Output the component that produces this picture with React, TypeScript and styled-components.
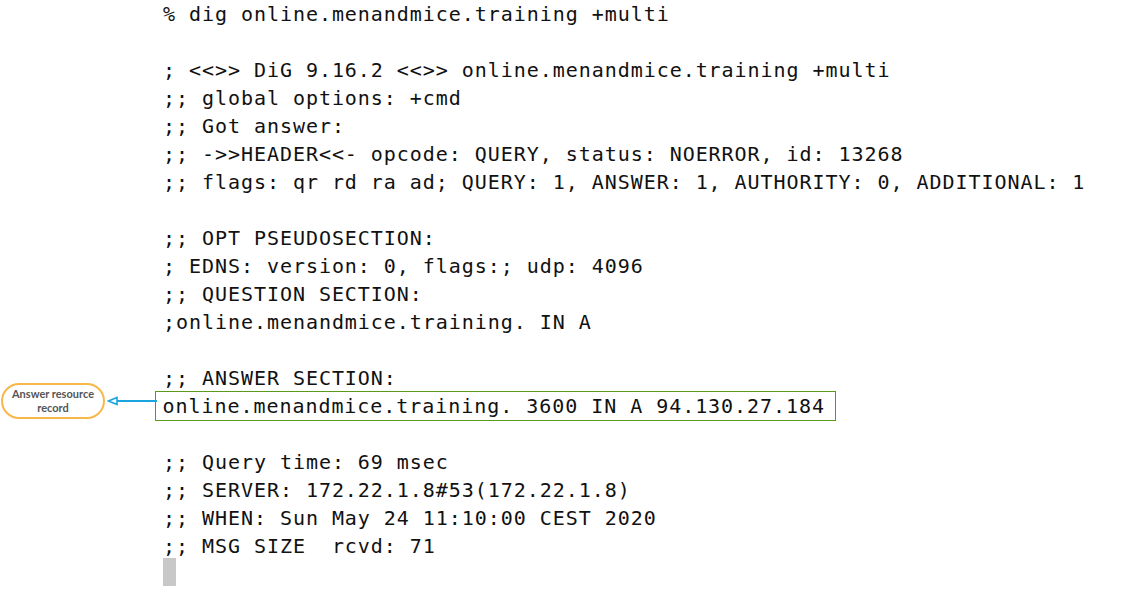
import React from "react";
import styled, { createGlobalStyle } from "styled-components";

const Global = createGlobalStyle`
  html, body { margin: 0; padding: 0; background: #ffffff; }
  body { width: 1143px; height: 589px; overflow: hidden; }
`;

const Terminal = styled.div`
  padding: 0 0 0 163px;
  font-family: "DejaVu Sans Mono", "Liberation Mono", monospace;
  font-size: 20px;
  letter-spacing: 0.95px;
  line-height: 28px;
  color: #111111;
  white-space: pre;
`;

const Line = styled.div`
  height: 28px;
`;

const HighlightRow = styled.div`
  position: relative;
  height: 28px;
`;

const HighlightBox = styled.div`
  display: inline-block;
  margin: -3px 0 0 -8px;
  padding: 0 10px 0 6.5px;
  border: 1.5px solid #5b9a18;
  line-height: 28px;
`;

const Callout = styled.div`
  position: absolute;
  left: -162px;
  top: -9px;
  display: flex;
  align-items: center;
`;

const Pill = styled.div`
  box-sizing: border-box;
  width: 104px;
  height: 36px;
  border: 2px solid #f8b849;
  border-radius: 18px;
  display: flex;
  align-items: center;
  justify-content: center;
  text-align: center;
  font-family: Lato, "Open Sans", sans-serif;
  font-weight: 700;
  font-size: 11px;
  line-height: 14px;
  letter-spacing: 0;
  color: #555555;
  white-space: normal;
`;

const Arrow = styled.svg`
  display: block;
  margin-left: 2px;
`;

const Cursor = styled.div`
  width: 13px;
  height: 28px;
  margin-top: -2px;
  background: #c8c8c8;
`;

const lines1 = [
  "% dig online.menandmice.training +multi",
  "",
  "; <<>> DiG 9.16.2 <<>> online.menandmice.training +multi",
  ";; global options: +cmd",
  ";; Got answer:",
  ";; ->>HEADER<<- opcode: QUERY, status: NOERROR, id: 13268",
  ";; flags: qr rd ra ad; QUERY: 1, ANSWER: 1, AUTHORITY: 0, ADDITIONAL: 1",
  "",
  ";; OPT PSEUDOSECTION:",
  "; EDNS: version: 0, flags:; udp: 4096",
  ";; QUESTION SECTION:",
  ";online.menandmice.training. IN A",
  "",
  ";; ANSWER SECTION:",
];

const lines2 = [
  "",
  ";; Query time: 69 msec",
  ";; SERVER: 172.22.1.8#53(172.22.1.8)",
  ";; WHEN: Sun May 24 11:10:00 CEST 2020",
  ";; MSG SIZE  rcvd: 71",
];

export default function App() {
  return (
    <>
      <Global />
      <Terminal>
        {lines1.map((l, i) => (
          <Line key={"a" + i}>{l}</Line>
        ))}
        <HighlightRow>
          <Callout>
            <Pill>
              Answer resource
              <br />
              record
            </Pill>
            <Arrow width="50" height="12" viewBox="0 0 50 12">
              <line x1="10" y1="6" x2="50" y2="6" stroke="#1aa5df" strokeWidth="2" />
              <polygon points="1.5,6 10,2.5 10,9.5" fill="#ffffff" stroke="#1aa5df" strokeWidth="1.6" strokeLinejoin="miter" />
            </Arrow>
          </Callout>
          <HighlightBox>online.menandmice.training. 3600 IN A 94.130.27.184</HighlightBox>
        </HighlightRow>
        {lines2.map((l, i) => (
          <Line key={"b" + i}>{l}</Line>
        ))}
        <Cursor />
      </Terminal>
    </>
  );
}
